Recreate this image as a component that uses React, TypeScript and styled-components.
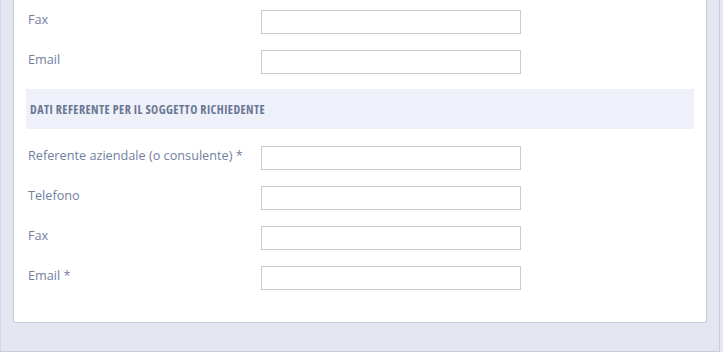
import React from "react";
import styled, { createGlobalStyle } from "styled-components";

const Global = createGlobalStyle`
  html, body { margin: 0; padding: 0; background: #e4e7f1; }
  body { font-family: "Open Sans", "Liberation Sans", sans-serif; }
`;

const Page = styled.div`
  width: 723px;
  height: 352px;
  display: flex;
  overflow: hidden;
`;

const Frame = styled.div`
  width: 720px;
  height: 352px;
  border-left: 1px solid #d3d7e3;
  border-right: 1px solid #c9cdd9;
  border-bottom: 1px solid #c9cdd9;
  padding: 0 12px;
  box-sizing: border-box;
  display: flex;
  flex-direction: column;
`;

const Card = styled.div`
  background: #ffffff;
  border: 1px solid #c8ccd9;
  border-top: none;
  border-radius: 0 0 3px 3px;
  padding: 10px 12px 32px 14px;
  display: flex;
  flex-direction: column;
`;

const Row = styled.div<{ $top?: number }>`
  display: grid;
  grid-template-columns: 233px 260px;
  align-items: start;
  margin-top: ${(p) => p.$top ?? 16}px;
`;

const Label = styled.span`
  font-size: 12.7px;
  line-height: 19px;
  color: #7381a0;
`;

const Input = styled.input`
  height: 24px;
  width: 260px;
  box-sizing: border-box;
  border: 1px solid #cbcbcb;
  background: #fff;
  margin: 0;
  padding: 0 6px;
  font-family: inherit;
  outline: none;
`;

const Section = styled.div`
  margin: 15px 0 0 -2px;
  width: 668px;
  height: 40px;
  background: #eef1f9;
  display: flex;
  align-items: center;
  padding-left: 4px;
  box-sizing: border-box;
`;

const SectionTitle = styled.span`
  font-family: "Open Sans", "Liberation Sans", sans-serif;
  font-weight: 700;
  font-size: 12px;
  font-stretch: 80%;
  letter-spacing: 0.45px;
  color: #6a7794;
  text-transform: uppercase;
`;

const Field = ({ label, top }: { label: string; top?: number }) => (
  <Row $top={top}>
    <Label>{label}</Label>
    <Input type="text" />
  </Row>
);

export default function App() {
  return (
    <>
      <Global />
      <Page>
        <Frame>
          <Card>
            <Field label="Fax" top={0} />
            <Field label="Email" />
            <Section>
              <SectionTitle>Dati referente per il soggetto richiedente</SectionTitle>
            </Section>
            <Field label="Referente aziendale (o consulente) *" top={17} />
            <Field label="Telefono" />
            <Field label="Fax" />
            <Field label="Email *" />
          </Card>
        </Frame>
      </Page>
    </>
  );
}
